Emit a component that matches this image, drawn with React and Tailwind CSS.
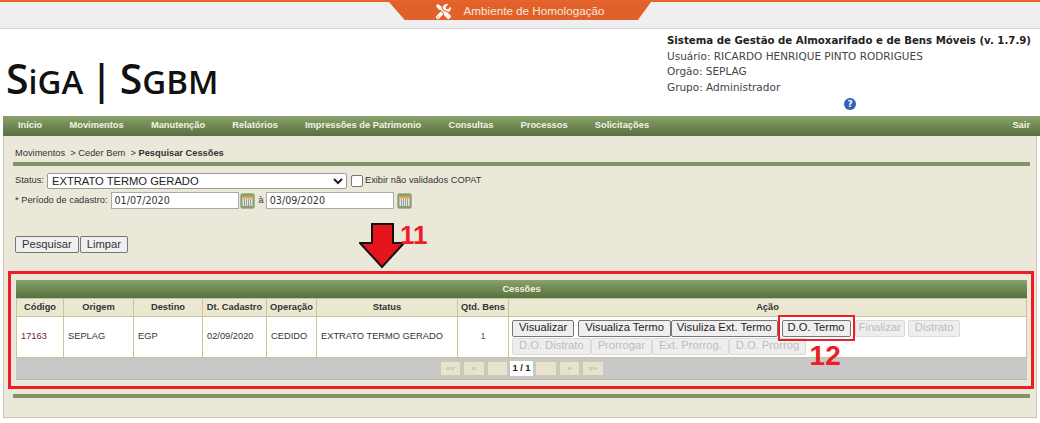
import { FaTools } from 'react-icons/fa'

const menu = ['Início', 'Movimentos', 'Manutenção', 'Relatórios', 'Impressões de Patrimonio', 'Consultas', 'Processos', 'Solicitações']
const heads = ['Código', 'Origem', 'Destino', 'Dt. Cadastro', 'Operação', 'Status', 'Qtd. Bens', 'Ação']

function Calendar() {
  return (
    <svg width="15" height="16" viewBox="0 0 15 16" className="shrink-0">
      <rect x="0.5" y="0.5" width="14" height="15" rx="2" fill="#8a9c72" stroke="#a9b596" />
      <rect x="2.5" y="3" width="10" height="10" fill="#e8e6d2" />
      <rect x="2.5" y="3" width="10" height="2.5" fill="#d9a441" />
      <path d="M4.5 6v7M6.5 6v7M8.5 6v7M10.5 6v7" stroke="#8fa0a8" strokeWidth="1" />
    </svg>
  )
}

function Btn({ children, disabled, pad = 'px-[6px]' }) {
  return (
    <button
      disabled={disabled}
      className={`h-[17px] ${pad} rounded-[2px] border text-[11.2px] leading-none whitespace-nowrap ${
        disabled ? 'border-[#dadada] bg-[#eeeeee] text-[#bdbdbd]' : 'border-[#767676] bg-[#efefef] text-[#222]'
      }`}
    >
      {children}
    </button>
  )
}

function PageBtn({ children }) {
  return (
    <span className="w-[21.5px] h-[15px] border border-[#cfc9a8] bg-[#e6e3cf] text-[#b9b59c] text-[8px] leading-[13px] text-center">
      {children}
    </span>
  )
}

export default function App() {
  return (
    <div className="w-[1040px] h-[423px] overflow-hidden bg-white font-['Liberation_Sans',Arial,sans-serif] text-[#333]">
      {/* faixa de ambiente */}
      <div className="h-[29px] border-t-2 border-[#e8622c] border-b border-b-[#d4d4d4] bg-[#efefef] flex justify-center">
        <div className="w-[262px] h-[18px] bg-[#e0622a] [clip-path:polygon(0_0,100%_0,95%_100%,6%_100%)] flex items-center justify-center gap-[13px] text-[#f6e6dc] text-[11.7px]">
          <FaTools size={15} className="text-white" />
          <span>Ambiente de Homologação</span>
        </div>
      </div>

      {/* cabecalho */}
      <div className="h-[87px] flex">
        <div className="w-[667px] shrink-0 pl-[6px] pt-[25px]">
          <div className="font-['Open_Sans',sans-serif] text-[#111] leading-[48px] whitespace-nowrap flex items-baseline font-semibold">
            <span className="text-[41px]">S</span>
            <span className="text-[32px]">i</span>
            <span className="text-[33px]">GA</span>
            <span className="text-[41px] font-semibold mx-[7px]">|</span>
            <span className="text-[41px]">S</span>
            <span className="text-[33px]">GBM</span>
          </div>
        </div>
        <div className="flex-1 pt-[4px] font-['DejaVu_Sans',sans-serif] text-[10.5px] leading-[15.5px] text-[#444]">
          <div className="font-bold text-[#222] text-[10.2px] whitespace-nowrap">Sistema de Gestão de Almoxarifado e de Bens Móveis (v. 1.7.9)</div>
          <div>Usuário: RICARDO HENRIQUE PINTO RODRIGUES</div>
          <div>Orgão: SEPLAG</div>
          <div>Grupo: Administrador</div>
          <div className="ml-[177px] mt-[3px] w-[12px] h-[12px] rounded-full bg-[#2f62b5] text-white text-[9px] leading-[12px] text-center font-bold">?</div>
        </div>
      </div>

      {/* menu */}
      <div className="ml-[3px] h-[20px] bg-gradient-to-b from-[#8aa36a] to-[#56703f] flex items-center pl-[15px] pr-[10px] gap-[27.2px] text-[9.3px] font-bold text-[#f2f2e4]">
        {menu.map((m) => (
          <span key={m}>{m}</span>
        ))}
        <span className="ml-auto">Sair</span>
      </div>

      {/* conteudo */}
      <div className="mx-[3px] h-[282px] bg-[#ebe8d9] border border-t-0 border-[#cdc9ae] pl-[9px] pr-[6px]">
        <div className="h-[26px] pl-[2px] pt-[11px] text-[9.3px] leading-[12px] text-[#333]">
          Movimentos &nbsp;&gt; Ceder Bem &nbsp;&gt; <b>Pesquisar Cessões</b>
        </div>
        <div className="h-[4px] bg-[#7f9467]" />

        <div className="mt-[6px] pl-[2px] flex items-center h-[17px] text-[9.3px] gap-[3px]">
          <span>Status:</span>
          <select defaultValue="e" className="w-[300px] h-[16px] bg-white border border-[#999] rounded-[2px] text-[11.2px] leading-none text-[#222]">
            <option value="e">EXTRATO TERMO GERADO</option>
          </select>
          <span className="w-[12px] h-[12px] ml-[1px] rounded-[2px] border border-[#777] bg-white" />
          <span className="-ml-[1px]">Exibir não validados COPAT</span>
        </div>
        <div className="mt-[3px] pl-[2px] flex items-center h-[17px] text-[9.3px] gap-[1px]">
          <span>* Período de cadastro:</span>
          <span className="w-[128px] h-[17px] ml-[2px] bg-white border border-[#aaa] font-['DejaVu_Sans',sans-serif] text-[9.6px] leading-[15px] pl-[3px]">01/07/2020</span>
          <Calendar />
          <span className="ml-[3px] mr-[1px]">à</span>
          <span className="w-[128px] h-[17px] bg-white border border-[#aaa] font-['DejaVu_Sans',sans-serif] text-[9.6px] leading-[15px] pl-[3px]">03/09/2020</span>
          <span className="w-[1px]" />
          <Calendar />
        </div>

        <div className="mt-[27px] pl-[2px] flex gap-[1px]">
          <button className="h-[17px] px-[6px] border border-[#767676] rounded-[2px] bg-[#efefef] text-[11.2px] leading-none">Pesquisar</button>
          <button className="h-[17px] px-[6px] border border-[#767676] rounded-[2px] bg-[#efefef] text-[11.2px] leading-none">Limpar</button>
        </div>

        {/* tabela com a marcacao vermelha */}
        <div className="relative mt-[18px] -ml-[5px] w-[1026px] border-[3px] border-[#ee1c25] pt-[6px] pl-[5px] pr-[4px] pb-[6px]">
          <svg width="46" height="46" viewBox="0 0 46 46" className="absolute left-[348px] top-[-51px]">
            <path d="M13 1h21v19h11L23 44 1 20h12z" fill="#e8141c" stroke="#111" strokeWidth="2" />
          </svg>
          <span className="absolute left-[389px] top-[-54px] text-[26px] leading-[30px] font-bold text-[#ee1c25]">11</span>

          <div className="h-[18px] bg-gradient-to-b from-[#8aa36a] to-[#56703f] text-center text-[9.3px] font-bold leading-[18px] text-[#f2f2e4]">Cessões</div>
          <table className="w-full table-fixed border-collapse text-[9.3px]">
            <colgroup>
              <col className="w-[47px]" />
              <col className="w-[70px]" />
              <col className="w-[69px]" />
              <col className="w-[64px]" />
              <col className="w-[50px]" />
              <col className="w-[141px]" />
              <col className="w-[51px]" />
              <col />
            </colgroup>
            <thead>
              <tr className="h-[18px] bg-[#ebe8d2]">
                {heads.map((h) => (
                  <th key={h} className="border border-[#c9c3a0] font-bold whitespace-nowrap p-0">{h}</th>
                ))}
              </tr>
            </thead>
            <tbody>
              <tr className="h-[41px] bg-white">
                <td className="border border-[#c9c3a0] pl-[4px] text-[#6b1f1f]">17163</td>
                <td className="border border-[#c9c3a0] pl-[4px]">SEPLAG</td>
                <td className="border border-[#c9c3a0] pl-[4px]">EGP</td>
                <td className="border border-[#c9c3a0] pl-[4px]">02/09/2020</td>
                <td className="border border-[#c9c3a0] pl-[4px]">CEDIDO</td>
                <td className="border border-[#c9c3a0] pl-[4px] whitespace-nowrap">EXTRATO TERMO GERADO</td>
                <td className="border border-[#c9c3a0] text-center text-[#7a5a10]">1</td>
                <td className="border border-[#c9c3a0] pl-[3px] py-0">
                  <div className="flex items-center">
                    <Btn>Visualizar</Btn>
                    <span className="w-[4px]" />
                    <Btn>Visualiza Termo</Btn>
                    <Btn pad="px-[5px]">Visuliza Ext. Termo</Btn>
                    <span className="relative ml-[4px] flex">
                      <Btn pad="px-[5px]">D.O. Termo</Btn>
                      <span className="absolute -inset-x-[4px] -top-[5px] -bottom-[4px] border-[2px] border-[#ee1c25]" />
                      <span className="absolute left-[28px] top-[22px] text-[28px] leading-[28px] font-bold text-[#ee1c25]">12</span>
                    </span>
                    <span className="w-[4px]" />
                    <Btn disabled pad="px-[3px]">Finalizar</Btn>
                    <span className="w-[3px]" />
                    <Btn disabled>Distrato</Btn>
                  </div>
                  <div className="flex mt-[1px]">
                    <Btn disabled>D.O. Distrato</Btn>
                    <Btn disabled>Prorrogar</Btn>
                    <Btn disabled>Ext. Prorrog.</Btn>
                    <Btn disabled>D.O. Prorrog</Btn>
                  </div>
                </td>
              </tr>
            </tbody>
          </table>
          <div className="h-[22px] bg-[#c8c8c8] border-b border-[#b9b9a8] flex items-center justify-center gap-[2px]">
            <PageBtn>««</PageBtn>
            <PageBtn>«</PageBtn>
            <PageBtn />
            <span className="w-[23px] h-[15px] bg-white text-[9.3px] font-bold leading-[15px] text-center text-[#222]">1 / 1</span>
            <PageBtn />
            <PageBtn>»</PageBtn>
            <PageBtn>»»</PageBtn>
          </div>
        </div>

        <div className="mt-[5px] h-[4px] bg-[#7f9467]" />
      </div>
    </div>
  )
}
